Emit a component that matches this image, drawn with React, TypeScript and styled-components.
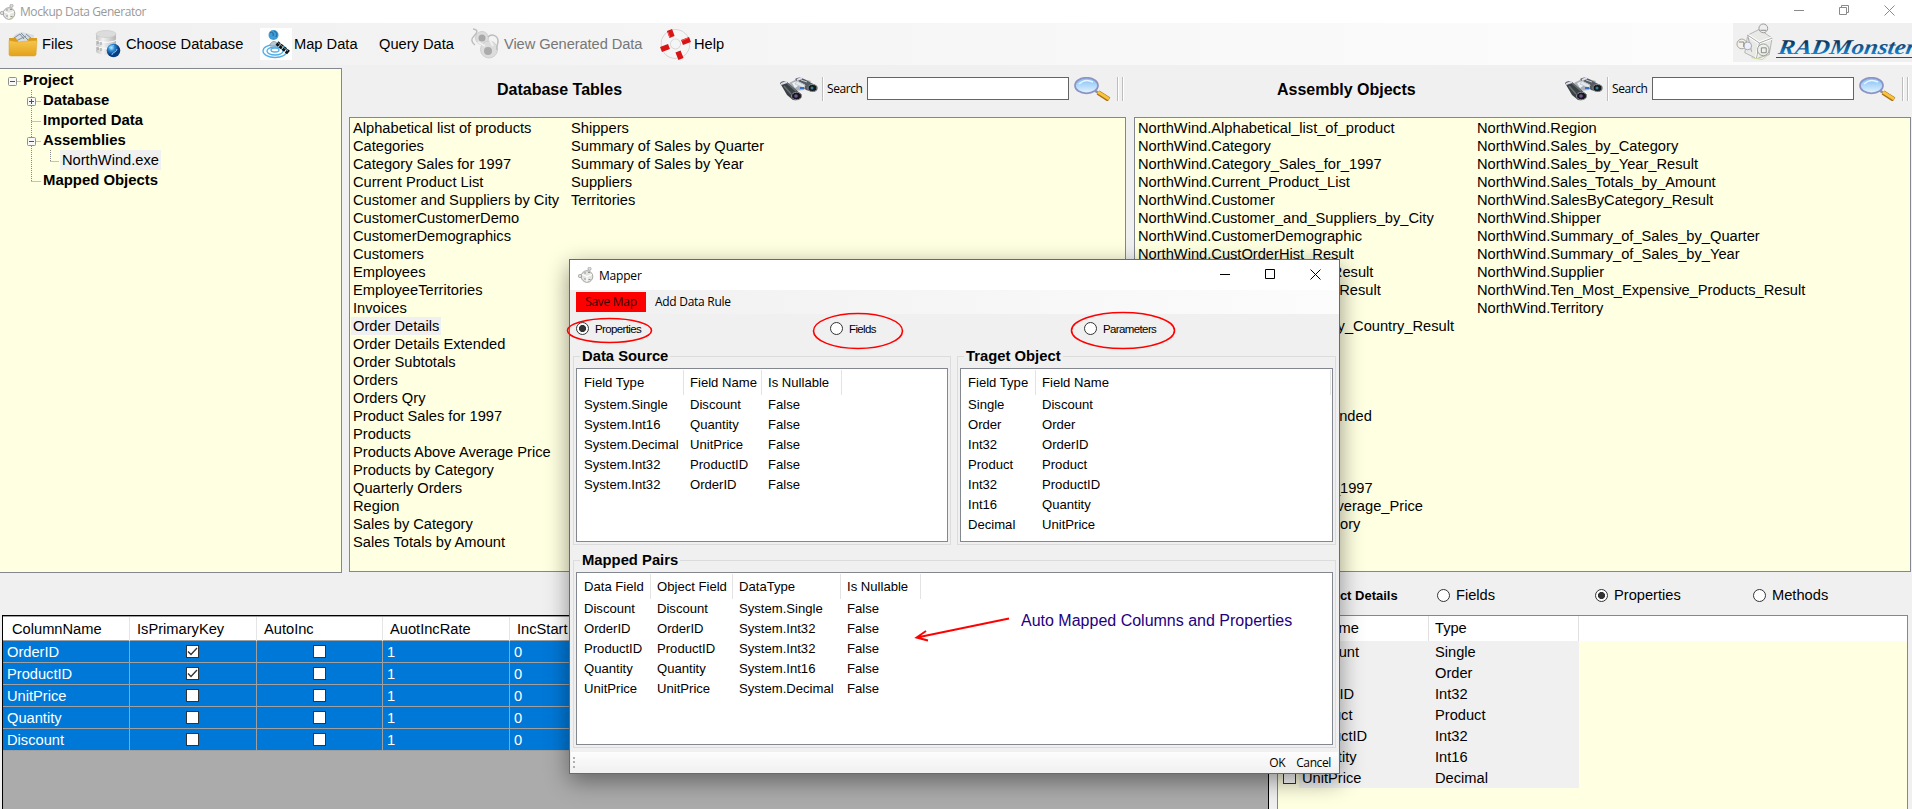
import React from 'react';
import styled, { createGlobalStyle } from 'styled-components';

const sans = `"Liberation Sans", Arial, sans-serif`;
const ui = `"Open Sans", "Noto Sans", sans-serif`;

const GlobalStyle = createGlobalStyle`
  body { margin: 0; overflow: hidden; background: #f0f0f0; }
  * { box-sizing: border-box; }
`;

const Screen = styled.div`
  position: relative;
  display: flex;
  flex-direction: column;
  width: 1912px;
  height: 809px;
  overflow: hidden;
  background: #f0f0f0;
  color: #000;
  font: 14.67px ${sans};
  white-space: nowrap;
`;

const TitleBar = styled.div`
  display: flex;
  align-items: center;
  height: 23px;
  flex: none;
  background: #fff;
`;
const AppTitle = styled.span`
  flex: 1;
  margin-left: 4px;
  font: 12px ${ui};
  letter-spacing: -0.42px;
  color: #999;
`;
const WindowButtons = styled.div<{ $color: string; $pad: number }>`
  display: flex;
  gap: 35px;
  margin-top: -2px;
  padding-right: ${p => p.$pad}px;
  color: ${p => p.$color};
  svg { display: block; }
`;

const Toolbar = styled.div`
  display: flex;
  align-items: center;
  height: 42px;
  flex: none;
  background: linear-gradient(90deg, #f0f0f0, #fcfcfc 90%);
`;
const ToolItem = styled.div<{ $w: number; $gap?: number; $muted?: boolean; $ls?: number }>`
  display: flex;
  align-items: center;
  width: ${p => p.$w}px;
  padding-left: 8px;
  gap: ${p => p.$gap ?? 4}px;
  color: ${p => (p.$muted ? '#777' : '#000')};
  letter-spacing: ${p => p.$ls ?? 0}px;
  svg { flex: none; display: block; }
`;
const Brand = styled.div`
  width: 179px;
  height: 39px;
  margin-left: auto;
  align-self: flex-start;
  background: #f0f0f0;
  overflow: hidden;
`;

const Upper = styled.div`
  display: flex;
  height: 508px;
  flex: none;
`;
const TreePanel = styled.div`
  width: 342px;
  height: 505px;
  margin-top: 3px;
  padding: 1px 0 0 8px;
  border: 1px solid #828790;
  border-left: 0;
  background: #ffffe1;
`;
const TreeRow = styled.div`
  display: flex;
  align-items: center;
  height: 20px;
  svg { flex: none; display: block; }
`;
const TreeText = styled.span<{ $leaf?: boolean }>`
  line-height: 20px;
  padding: ${p => (p.$leaf ? '0 2px' : '0')};
  margin-left: ${p => (p.$leaf ? 0 : 1)}px;
  font-weight: ${p => (p.$leaf ? 'normal' : 'bold')};
  font-size: ${p => (p.$leaf ? 14.67 : 14.9)}px;
  background: ${p => (p.$leaf ? '#f0f0f0' : 'none')};
`;

const Section = styled.div<{ $gap: number }>`
  display: flex;
  flex-direction: column;
  width: 777px;
  height: 507px;
  margin-left: ${p => p.$gap}px;
`;
const SectionHead = styled.div`
  display: flex;
  align-items: center;
  height: 52px;
  padding-bottom: 5px;
`;
const Heading = styled.div<{ $inset: number }>`
  width: 431px;
  padding: 3px 0 0 ${p => p.$inset}px;
  font-size: 16px;
  font-weight: bold;
`;
const Separator = styled.div<{ $left: number }>`
  width: 1px;
  height: 24px;
  margin-left: ${p => p.$left}px;
  background: #bdbdbd;
  box-shadow: 1px 0 #fff;
`;
const SearchLabel = styled.label`
  width: 40px;
  margin-left: 4px;
  font: 12px ${ui};
  letter-spacing: -0.42px;
`;
const SearchInput = styled.input`
  width: 202px;
  height: 23px;
  padding: 0 4px;
  border: 1px solid #646464;
  background: #fff;
`;
const LensSlot = styled.div`
  width: 43px;
  padding-left: 5px;
  svg { display: block; }
`;
const ListBox = styled.div<{ $first: number }>`
  display: grid;
  grid-template-columns: ${p => p.$first}px 1fr;
  flex: 1;
  padding: 1px 0 0 1px;
  border: 1px solid #828790;
  background: #ffffe1;
`;
const ListColumn = styled.div`
  display: flex;
  flex-direction: column;
  align-items: flex-start;
`;
const ListItem = styled.div<{ $on?: boolean }>`
  height: 18px;
  line-height: 18px;
  padding: 0 2px;
  background: ${p => (p.$on ? '#f0f0f0' : 'none')};
`;

const Lower = styled.div`
  display: flex;
  flex: 1;
`;
const DataGrid = styled.div`
  width: 1267px;
  margin: 42px 0 0 2px;
  border: 1px solid #000;
  border-bottom: 0;
  background: #ababab;
`;
const GridHead = styled.div`
  display: grid;
  grid-template-columns: 127px 127px 126px 127px 1fr;
  height: 25px;
  border-top: 1px solid #a0a0a0;
  border-bottom: 1px solid #a0a0a0;
  background: #fff;
`;
const GridHeadCell = styled.div`
  line-height: 24px;
  padding-left: 7px;
  border-right: 1px solid #e5e5e5;
  &:first-child { padding-left: 9px; }
`;
const GridRow = styled(GridHead)`
  height: 22px;
  border-top: 0;
  background: #0078d7;
  color: #fff;
`;
const GridCell = styled.div<{ $center?: boolean }>`
  display: flex;
  align-items: center;
  justify-content: ${p => (p.$center ? 'center' : 'flex-start')};
  padding: ${p => (p.$center ? '0 1px 0 0' : '0 0 0 4px')};
  border-right: 1px solid #a0a0a0;
`;
const CheckBox = styled.span`
  display: flex;
  flex: none;
  width: 13px;
  height: 13px;
  border: 1px solid #333;
  background: #fff;
`;

const Details = styled.div`
  width: 631px;
  margin-left: 8px;
`;
const DetailsHead = styled.div`
  display: flex;
  align-items: center;
  height: 42px;
  padding: 2px 0 0 34px;
`;
const DetailsTitle = styled.div`
  width: 126px;
  font-size: 13px;
  font-weight: bold;
`;
const RadioItem = styled.div<{ $w: number }>`
  display: flex;
  align-items: center;
  width: ${p => p.$w}px;
  gap: 6px;
`;
const Radio = styled.span<{ $on?: boolean }>`
  width: 13px;
  height: 13px;
  flex: none;
  border: 1px solid #333;
  border-radius: 50%;
  background: ${p => (p.$on ? 'radial-gradient(circle, #333 0 3.2px, #fff 3.9px)' : '#fff')};
`;
const DetailsList = styled.div`
  height: 200px;
  border: 1px solid #828790;
  background: #ffffe1;
`;
const DetailsCols = styled.div`
  display: grid;
  grid-template-columns: 151px 150px 1fr;
  height: 25px;
  background: #fff;
  line-height: 25px;
  & > div { border-right: 1px solid #e0e0e0; padding-left: 6px; }
  & > div:last-child { border: 0; }
`;
const DetailsRow = styled.div`
  display: flex;
  align-items: center;
  height: 21px;
  padding-left: 5px;
`;
const DetailsName = styled.div`
  width: 130px;
  height: 21px;
  margin-left: 3px;
  padding-left: 3px;
  line-height: 22px;
  background: #f0f0f0;
`;
const DetailsType = styled.div`
  width: 150px;
  height: 21px;
  padding-left: 6px;
  line-height: 22px;
  background: #f0f0f0;
`;

const Dialog = styled.div`
  position: absolute;
  left: 569px;
  top: 259px;
  width: 771px;
  height: 515px;
  display: flex;
  flex-direction: column;
  border: 1px solid #1a7fd0;
  background: #f0f0f0;
  box-shadow: 0 7px 22px rgba(0, 0, 0, 0.42);
`;
const DialogTitle = styled.div`
  display: flex;
  align-items: center;
  height: 30px;
  flex: none;
  padding-left: 8px;
  background: #fff;
`;
const DialogName = styled.span`
  flex: 1;
  margin-left: 5px;
  font: 12px ${ui};
  letter-spacing: -0.2px;
`;
const DialogBar = styled.div`
  display: flex;
  align-items: center;
  height: 24px;
  flex: none;
  padding-left: 6px;
  font: 12px ${ui};
  letter-spacing: -0.28px;
  background: linear-gradient(90deg, #f0f0f0, #fcfcfc);
`;
const SaveButton = styled.div`
  width: 70px;
  height: 20px;
  margin-right: 9px;
  line-height: 19px;
  text-align: center;
  background: #f00;
  color: #300;
`;
const BarLink = styled.div`
  height: 20px;
  line-height: 19px;
`;
const ModeRow = styled.div`
  display: flex;
  align-items: center;
  height: 29px;
  flex: none;
  padding-left: 6px;
  font-size: 11.5px;
  letter-spacing: -0.62px;
`;
const Groups = styled.div`
  display: grid;
  grid-template-columns: 378px 379px;
  grid-template-rows: 197px 196px;
  column-gap: 6px;
  row-gap: 7px;
  padding: 5px 0 0 3px;
`;
const Group = styled.fieldset<{ $wide?: boolean }>`
  display: flex;
  flex-direction: column;
  min-width: 0;
  margin: 0;
  padding: 3px 2px 2px;
  border: 1px solid #dcdcdc;
  grid-column: ${p => (p.$wide ? '1 / 3' : 'auto')};
`;
const GroupTitle = styled.legend`
  height: 17px;
  margin-left: 4px;
  padding: 0 2px;
  line-height: 17px;
  font-size: 14.8px;
  font-weight: bold;
`;
const Table = styled.div`
  height: 174px;
  border: 1px solid #828790;
  background: #fff;
  font-size: 13.1px;
`;
const TableRow = styled.div<{ $cols: string; $head?: boolean }>`
  display: grid;
  grid-template-columns: ${p => p.$cols};
  height: ${p => (p.$head ? 24 : 20)}px;
  margin: ${p => (p.$head ? '1px 0' : '0')};
  line-height: ${p => (p.$head ? 25 : 20)}px;
  & > div {
    padding-left: 6px;
    border-right: 1px solid ${p => (p.$head ? '#e3e3e3' : 'transparent')};
  }
  & > div:first-child { padding-left: 7px; }
`;
const DialogFoot = styled.div`
  display: flex;
  align-items: center;
  justify-content: flex-end;
  height: 21px;
  margin: auto 1px 0;
  padding: 0 7px 0 2px;
  gap: 11px;
  font: 12px ${ui};
  letter-spacing: -0.38px;
  background: linear-gradient(#fdfdfd, #f0f0f0);
`;
const Grip = styled.div`
  width: 2px;
  height: 11px;
  margin-right: auto;
  background: repeating-linear-gradient(#b0b0b0 0 2px, transparent 2px 4.5px);
`;
const Marks = styled.svg`
  position: absolute;
  left: 0;
  top: 0;
  pointer-events: none;
`;
const Note = styled.div`
  position: absolute;
  left: 1021px;
  top: 612px;
  font-size: 16px;
  line-height: 18px;
  color: #24007f;
`;

const Cubes = ({ w, h }: { w: number; h: number }) => (
  <svg width={w} height={h} viewBox="0 0 40 38" fill="none" stroke="#9a9a9a">
    <path d="M12 12 24 6 37 15 34 32 21 36 9 30Z" fill="#e9e9e6" stroke="#b4b4b0" />
    <path d="M12 12 24 20 37 15M24 20 21 36" stroke="#fff" strokeWidth="3" />
    <path d="M12 12 24 20 37 15M24 20 21 36M12 12 16 29" stroke="#a5a5a5" />
    <circle cx="28" cy="5" r="4.500" fill="#eee" stroke="#999" />
    <circle cx="6" cy="21" r="5" fill="#f4f0ea" stroke="#a9a29b" />
    <circle cx="12" cy="23" r="4" fill="#eef" stroke="#a0a8a8" />
    <circle cx="28" cy="27" r="6" fill="#eef0ea" stroke="#989e98" />
    <path d="M25 7h6M3 19h5v5M26 25h5v5h-5z" stroke="#888" />
    <path d="M16 35 27 37 32 33" stroke="#c5d98f" />
  </svg>
);

/* Title bar version: a round body with three small knobs. */
const AppIcon = () => (
  <svg width="16" height="16" viewBox="0 0 16 16" fill="none">
    <circle cx="9" cy="9.500" r="5.800" fill="#e4e4e2" stroke="#a3a3a0" />
    <path d="M4 7.500 9 9.500 14 7.500M9 9.500V15" stroke="#fff" strokeWidth="1.200" />
    <path d="M6 12h2M10.500 12.500h2M6 6h2M10 5.500h2" stroke="#96968f" />
    <circle cx="11.500" cy="1.800" r="1.600" fill="#ddd" stroke="#999" strokeWidth=".7" />
    <circle cx="2" cy="9" r="1.700" fill="#ddd" stroke="#999" strokeWidth=".7" />
    <path d="M9 15.200 12.500 14.500" stroke="#b9cf8a" />
  </svg>
);

const MinMaxClose = ({ restore, color, pad }: { restore?: boolean; color: string; pad: number }) => (
  <WindowButtons $color={color} $pad={pad}>
    <svg width="10" height="11" stroke="currentColor"><path d="M0 5.500h10" /></svg>
    <svg width="10" height="11" fill="none" stroke="currentColor">
      {restore ? <path d="M.5 2.500h7v7h-7zM2.500 2.500v-2h7v7h-2" /> : <path d="M.5.500h9v9h-9z" />}
    </svg>
    <svg width="11" height="11" stroke="currentColor"><path d="M.5.500 10.500 10.500M10.500.500.5 10.500" /></svg>
  </WindowButtons>
);

const FolderIcon = () => (
  <svg width="30" height="26" viewBox="0 0 30 26">
    <defs><linearGradient id="fold" x2="0" y2="1"><stop stopColor="#f6c64c" /><stop offset="1" stopColor="#e3a21c" /></linearGradient></defs>
    <path d="M2 9 8 3 14 1 26 4 25 13H2z" fill="#d7dde2" />
    <path d="M6 7 12 3 16 8M13 2 20 9M18 3 24 8M8 10 18 5" stroke="#7d8e9b" fill="none" />
    <path d="M1 7h7l2 4h9l2-4h8v4H1z" fill="#d99b1c" />
    <path d="M1 9.500 10 11 20 10 29 9.500 28 24 26.500 25h-24L1 24z" fill="url(#fold)" stroke="#dba02b" strokeWidth=".5" />
  </svg>
);
const DatabaseIcon = () => (
  <svg width="26" height="28" viewBox="0 0 26 28">
    <defs>
      <linearGradient id="cyl"><stop stopColor="#c4c4c4" /><stop offset=".35" stopColor="#f2f2f2" /><stop offset="1" stopColor="#b5b5b5" /></linearGradient>
      <radialGradient id="globe" cx=".35" cy=".3"><stop stopColor="#c8ecff" /><stop offset=".45" stopColor="#2f8ed8" /><stop offset="1" stopColor="#0a3d82" /></radialGradient>
    </defs>
    <path d="M1 4v17c0 5 20 5 20 0V4z" fill="url(#cyl)" />
    <ellipse cx="11" cy="4" rx="10" ry="3.500" fill="#dcdcdc" stroke="#c8c8c8" strokeWidth=".6" />
    <path d="M1 10c3 3 17 3 20 0M1 16c3 3 17 3 20 0" fill="none" stroke="#fff" />
    <path d="M3 11v3M6 12v3M3 17v3M6 18v3" stroke="#999" />
    <circle cx="18.500" cy="20.500" r="6.800" fill="url(#globe)" />
    <path d="M14 18c2-3 4-1 5-3M17 25c0-3 4-2 5-6" stroke="#8fd0ff" fill="none" />
  </svg>
);
const MapIcon = () => (
  <svg width="32" height="32" viewBox="0 0 32 32">
    <path d="M0 0h32v32H0z" fill="#fff" />
    <g fill="none" stroke="#53aee8" strokeWidth="1.300">
      <ellipse cx="15" cy="23" rx="12" ry="6.500" /><ellipse cx="15" cy="23" rx="8" ry="4" /><ellipse cx="15" cy="22" rx="4" ry="2" />
    </g>
    <path d="M10 18c0-6 8-6 8 0z" fill="#b9c9d3" stroke="#7894a5" strokeWidth=".7" />
    <circle cx="13.500" cy="7" r="5" fill="#3f9bd3" /><path d="M10 5c2-2 4 0 3 3M14 3c2 1 4 2 2 6" stroke="#1c5f93" fill="none" />
    <path d="M17 15 29 25" stroke="#111" strokeWidth="4.500" strokeDasharray="3 1" />
    <path d="M17 14 28 23" stroke="#8d9294" strokeWidth="1" />
  </svg>
);
const GearsIcon = () => (
  <svg width="30" height="32" viewBox="0 0 30 32">
    <g fill="#dcdcdc" stroke="#cfcfcf">
      <circle cx="12" cy="10" r="6.500" /><circle cx="19" cy="21.500" r="8.500" />
    </g>
    <path d="M3 1c6 1 4 4 1 7s-3 6 1 9M18 9c4-4 10-1 10 4s-2 4-1 9" fill="none" stroke="#bdbdbd" strokeWidth="1.500" />
    <circle cx="12" cy="10" r="3.500" fill="#a8a8a8" /><circle cx="18" cy="23" r="4" fill="#ababab" />
    <path d="M8 14 15 18M20 12l3 6" stroke="#f0f0f0" strokeWidth="2" />
  </svg>
);
const HelpIcon = () => (
  <svg width="31" height="32" viewBox="0 0 31 32">
    <circle cx="15.500" cy="16" r="9.700" fill="none" stroke="#cfcfcf" strokeWidth="10" />
    <circle cx="15.500" cy="16" r="9.700" fill="none" stroke="#f5f5f5" strokeWidth="8.600" />
    <g stroke="#d91414" strokeWidth="5.500">
      <path d="M12 9 9.500 2M22 14.500 30 11.500M9 18.500 1 21.500M18 23.500 21 31" />
    </g>
    <path d="M10 10 8 4M22 12.500 28 10" stroke="#f55" strokeWidth="1" />
  </svg>
);
const Binoculars = () => (
  <svg width="38" height="24" viewBox="0 0 38 24">
    <path d="M9 6 19 1 31 4 24 13 14 14z" fill="#a9b0b8" />
    <path d="M12 6 20 3 24 5 15 11zM20 8l8-3 2 2-8 5z" fill="#eef1f4" />
    <path d="M0 6Q2 3 7 5L22 18Q21 24 13 23L7 18z" fill="#3a4044" />
    <path d="M15 2Q19-1 24 2L37 9Q39 14 33 15L26 13z" fill="#565d62" />
    <path d="M17 4 25 8 24 11 15 7zM21 3 27 5" fill="#e4e8ec" stroke="#c3c9ce" />
    <path d="M1 7 7 5M17 3 22 1" stroke="#dde" strokeWidth="2" />
    <path d="M4 9 11 17M7 6 16 14" stroke="#697075" strokeWidth="1.500" />
    <ellipse cx="16.500" cy="19" rx="5" ry="3.800" fill="#15181b" stroke="#8b9094" />
    <ellipse cx="32.500" cy="11" rx="4.500" ry="3.500" fill="#15181b" stroke="#8b9094" />
    <circle cx="16" cy="19" r="1.800" fill="#7c4f9a" /><circle cx="32" cy="11" r="1.500" fill="#377f9a" />
    <path d="M20 11h4" stroke="#2f6fd0" strokeWidth="2" />
  </svg>
);
const Lens = () => (
  <svg width="38" height="24" viewBox="0 0 38 24">
    <defs><linearGradient id="lens" x2="0" y2="1"><stop stopColor="#7fbcf5" /><stop offset="1" stopColor="#e4f6ff" /></linearGradient></defs>
    <path d="M20 13 26 17" stroke="#8f8f9c" strokeWidth="2.500" />
    <path d="M24 15.500 35 22.500" stroke="#a86f12" strokeWidth="5" />
    <path d="M24 15 35 22" stroke="#fbc23c" strokeWidth="3" />
    <ellipse cx="12.500" cy="8.500" rx="11.500" ry="7.800" fill="url(#lens)" stroke="#8d93c4" strokeWidth="1.700" />
    <path d="M5 7Q11 1 19 5" stroke="#e8f6ff" strokeWidth="1.500" fill="none" />
  </svg>
);
const Check = () => (
  <svg width="11" height="11" fill="none" stroke="#333" strokeWidth="1.300"><path d="M1 5.500 4 8.500 10 2" /></svg>
);

/* Dotted connector lines and the expander box in front of a tree label. */
const Guide = ({ depth, box, last }: { depth: number; box?: '+' | '-'; last?: boolean }) => {
  const w = [14, 34, 52][depth];
  const cx = [4.5, 23.5, 42.5][depth];
  return (
    <svg width={w} height="20" fill="none">
      <g stroke="#888" strokeDasharray="1 1">
        <path d={`M${cx} 11.500H${w - 1}`} />
        {depth === 1 && <path d={`M${cx} 0V${last ? 11 : 20}`} />}
        {depth === 2 && <path d="M23.500 0V20M42.500 0V11" />}
      </g>
      {box && (
        <>
          <rect x={cx - 4} y="7.500" width="8" height="8" rx="1" fill="#f8f8f8" stroke="#919191" />
          <path d={`M${cx - 2.5} 11.500h5` + (box === '+' ? `M${cx} 9v5` : '')} stroke="#3350a8" />
        </>
      )}
    </svg>
  );
};

const tables = [
  ['Alphabetical list of products', 'Categories', 'Category Sales for 1997', 'Current Product List',
    'Customer and Suppliers by City', 'CustomerCustomerDemo', 'CustomerDemographics', 'Customers', 'Employees',
    'EmployeeTerritories', 'Invoices', 'Order Details', 'Order Details Extended', 'Order Subtotals', 'Orders',
    'Orders Qry', 'Product Sales for 1997', 'Products', 'Products Above Average Price', 'Products by Category',
    'Quarterly Orders', 'Region', 'Sales by Category', 'Sales Totals by Amount'],
  ['Shippers', 'Summary of Sales by Quarter', 'Summary of Sales by Year', 'Suppliers', 'Territories'],
];
const objects = [
  ['Alphabetical_list_of_product', 'Category', 'Category_Sales_for_1997', 'Current_Product_List', 'Customer',
    'Customer_and_Suppliers_by_City', 'CustomerDemographic', 'CustOrderHist_Result', 'CustOrdersDetail_Result',
    'CustOrdersOrders_Result', 'Employee', 'Employee_Sales_by_Country_Result', 'EmployeeTerritory', 'Invoice',
    'Order', 'Order_Detail', 'Order_Details_Extended', 'Order_Subtotal', 'Orders_Qry', 'Product',
    'Product_Sales_for_1997', 'Products_Above_Average_Price', 'Products_by_Category', 'Quarterly_Order'],
  ['Region', 'Sales_by_Category', 'Sales_by_Year_Result', 'Sales_Totals_by_Amount', 'SalesByCategory_Result',
    'Shipper', 'Summary_of_Sales_by_Quarter', 'Summary_of_Sales_by_Year', 'Supplier',
    'Ten_Most_Expensive_Products_Result', 'Territory'],
].map(col => col.map(name => 'NorthWind.' + name));

const gridRows: [string, boolean][] = [
  ['OrderID', true], ['ProductID', true], ['UnitPrice', false], ['Quantity', false], ['Discount', false],
];
const members = [
  ['Discount', 'Single'], ['Order', 'Order'], ['OrderID', 'Int32'], ['Product', 'Product'],
  ['ProductID', 'Int32'], ['Quantity', 'Int16'], ['UnitPrice', 'Decimal'],
];
const source = [
  ['System.Single', 'Discount', 'False'], ['System.Int16', 'Quantity', 'False'],
  ['System.Decimal', 'UnitPrice', 'False'], ['System.Int32', 'ProductID', 'False'],
  ['System.Int32', 'OrderID', 'False'],
];
const pairs = [
  ['Discount', 'Discount', 'System.Single', 'False'], ['OrderID', 'OrderID', 'System.Int32', 'False'],
  ['ProductID', 'ProductID', 'System.Int32', 'False'], ['Quantity', 'Quantity', 'System.Int16', 'False'],
  ['UnitPrice', 'UnitPrice', 'System.Decimal', 'False'],
];

const Panel = ({ title, inset, gap, first, columns, selected }: {
  title: string; inset: number; gap: number; first: number; columns: string[][]; selected?: string;
}) => (
  <Section $gap={gap}>
    <SectionHead>
      <Heading $inset={inset}>{title}</Heading>
      <Binoculars />
      <Separator $left={4} />
      <SearchLabel>Search</SearchLabel>
      <SearchInput />
      <LensSlot><Lens /></LensSlot>
      <Separator $left={5} />
      <Separator $left={4} />
    </SectionHead>
    <ListBox $first={first}>
      {columns.map((col, i) => (
        <ListColumn key={i}>
          {col.map(name => <ListItem key={name} $on={name === selected}>{name}</ListItem>)}
        </ListColumn>
      ))}
    </ListBox>
  </Section>
);

const DataTable = ({ cols, head, rows }: { cols: string; head: string[]; rows: string[][] }) => (
  <Table>
    <TableRow $cols={cols} $head>{head.map(h => <div key={h}>{h}</div>)}</TableRow>
    {rows.map((r, i) => (
      <TableRow key={i} $cols={cols}>{r.map((c, j) => <div key={j}>{c}</div>)}</TableRow>
    ))}
  </Table>
);

export default function App() {
  return (
    <>
      <GlobalStyle />
      <Screen>
        <TitleBar>
          <AppIcon />
          <AppTitle>Mockup Data Generator</AppTitle>
          <MinMaxClose restore color="#8a8a8a" pad={17} />
        </TitleBar>
        <Toolbar>
          <ToolItem $w={87}><FolderIcon />Files</ToolItem>
          <ToolItem $w={165} $gap={5}><DatabaseIcon />Choose Database</ToolItem>
          <ToolItem $w={119} $gap={2}><MapIcon />Map Data</ToolItem>
          <ToolItem $w={91}>Query Data</ToolItem>
          <ToolItem $w={190} $muted $ls={-0.08}><GearsIcon />View Generated Data</ToolItem>
          <ToolItem $w={80} $gap={3}><HelpIcon />Help</ToolItem>
          <Brand>
            <svg width="179" height="39">
              <defs><linearGradient id="brand" x2="0" y2="1"><stop offset=".25" stopColor="#0b3358" /><stop offset=".8" stopColor="#1587d8" /></linearGradient></defs>
              <g transform="translate(3 0)"><Cubes w={39} h={38} /></g>
              <text x="44" y="31" textLength="137" lengthAdjust="spacingAndGlyphs" fill="url(#brand)"
                transform="translate(6 0) skewX(-10)"
                fontFamily="Liberation Serif, serif" fontStyle="italic" fontWeight="bold" fontSize="21">RADMonster</text>
              <path d="M43 34.500h136" stroke="#444" />
            </svg>
          </Brand>
        </Toolbar>

        <Upper>
          <TreePanel>
            <TreeRow><Guide depth={0} box="-" /><TreeText>Project</TreeText></TreeRow>
            <TreeRow><Guide depth={1} box="+" /><TreeText>Database</TreeText></TreeRow>
            <TreeRow><Guide depth={1} /><TreeText>Imported Data</TreeText></TreeRow>
            <TreeRow><Guide depth={1} box="-" /><TreeText>Assemblies</TreeText></TreeRow>
            <TreeRow><Guide depth={2} /><TreeText $leaf>NorthWind.exe</TreeText></TreeRow>
            <TreeRow><Guide depth={1} last /><TreeText>Mapped Objects</TreeText></TreeRow>
          </TreePanel>
          <Panel title="Database Tables" inset={148} gap={7} first={218} columns={tables} selected="Order Details" />
          <Panel title="Assembly Objects" inset={143} gap={8} first={339} columns={objects} />
        </Upper>

        <Lower>
          <DataGrid>
            <GridHead>
              {['ColumnName', 'IsPrimaryKey', 'AutoInc', 'AuotIncRate', 'IncStart'].map(h => (
                <GridHeadCell key={h}>{h}</GridHeadCell>
              ))}
            </GridHead>
            {gridRows.map(([name, key]) => (
              <GridRow key={name}>
                <GridCell>{name}</GridCell>
                <GridCell $center><CheckBox>{key && <Check />}</CheckBox></GridCell>
                <GridCell $center><CheckBox /></GridCell>
                <GridCell>1</GridCell>
                <GridCell>0</GridCell>
              </GridRow>
            ))}
          </DataGrid>
          <Details>
            <DetailsHead>
              <DetailsTitle>Object Details</DetailsTitle>
              <RadioItem $w={158}><Radio />Fields</RadioItem>
              <RadioItem $w={158}><Radio $on />Properties</RadioItem>
              <RadioItem $w={100}><Radio />Methods</RadioItem>
            </DetailsHead>
            <DetailsList>
              <DetailsCols><div>Field Name</div><div>Type</div><div /></DetailsCols>
              {members.map(([name, type]) => (
                <DetailsRow key={name}>
                  <CheckBox /><DetailsName>{name}</DetailsName><DetailsType>{type}</DetailsType>
                </DetailsRow>
              ))}
            </DetailsList>
          </Details>
        </Lower>

        <Dialog>
          <DialogTitle>
            <AppIcon />
            <DialogName>Mapper</DialogName>
            <MinMaxClose color="#000" pad={18} />
          </DialogTitle>
          <DialogBar>
            <SaveButton>Save Map</SaveButton>
            <BarLink>Add Data Rule</BarLink>
          </DialogBar>
          <ModeRow>
            <RadioItem $w={254}><Radio $on />Properties</RadioItem>
            <RadioItem $w={254}><Radio />Fields</RadioItem>
            <RadioItem $w={100}><Radio />Parameters</RadioItem>
          </ModeRow>
          <Groups>
            <Group>
              <GroupTitle>Data Source</GroupTitle>
              <DataTable cols="107px 78px 80px" head={['Field Type', 'Field Name', 'Is Nullable']} rows={source} />
            </Group>
            <Group>
              <GroupTitle>Traget Object</GroupTitle>
              <DataTable cols="75px 295px" head={['Field Type', 'Field Name']} rows={members.map(([n, t]) => [t, n])} />
            </Group>
            <Group $wide>
              <GroupTitle>Mapped Pairs</GroupTitle>
              <DataTable cols="74px 82px 108px 80px" head={['Data Field', 'Object Field', 'DataType', 'Is Nullable']} rows={pairs} />
            </Group>
          </Groups>
          <DialogFoot>
            <Grip />
            <span>OK</span>
            <span>Cancel</span>
          </DialogFoot>
        </Dialog>

        <Marks width="1912" height="809" fill="none" stroke="#f00" strokeWidth="1.600">
          <ellipse cx="609.500" cy="330.500" rx="42" ry="12" />
          <ellipse cx="858" cy="331" rx="44.500" ry="17.500" />
          <ellipse cx="1123" cy="330.500" rx="51.500" ry="18" />
          <path d="M1009 618.500 917 637.500M926 631 916.500 637.500 928 640.500" strokeWidth="1.900" />
        </Marks>
        <Note>Auto Mapped Columns and Properties</Note>
      </Screen>
    </>
  );
}
